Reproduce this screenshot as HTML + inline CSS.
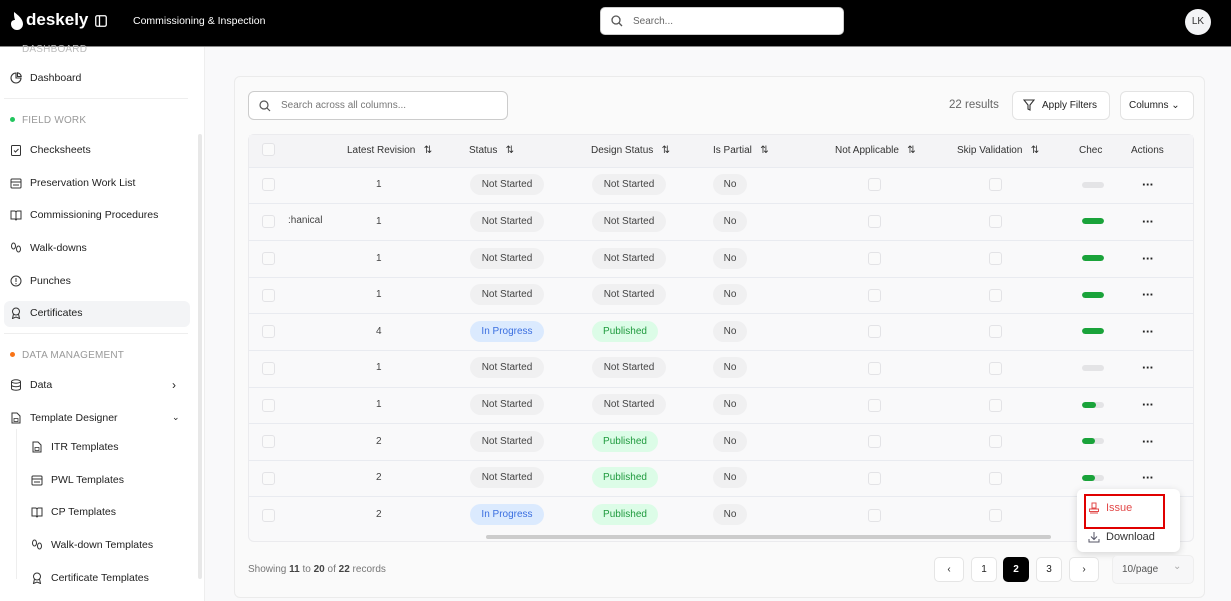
<!DOCTYPE html>
<html><head><meta charset="utf-8">
<style>
*{box-sizing:border-box;margin:0;padding:0}
body{width:1231px;height:601px;overflow:hidden;background:#f9f9fa;font-family:"Liberation Sans",sans-serif;font-size:11px;color:#222;position:relative}
.a{position:absolute}
.hdr{left:0;top:0;width:1231px;height:47px;background:#000;border-bottom:1px solid #888}
.side{left:0;top:47px;width:205px;height:554px;background:#fff;border-right:1px solid #eee}
.nav{position:absolute;left:10px;font-size:10.5px;color:#222;display:flex;align-items:center;gap:8px}
.nav svg{width:12px;height:12px}
.sec{position:absolute;left:22px;font-size:10px;color:#999;letter-spacing:.2px}
.card{left:234px;top:76px;width:971px;height:522px;background:#fafafa;border:1px solid #ebebeb;border-radius:6px}
.th{font-size:10px;color:#333;top:145px}
.pill{position:absolute;height:21px;line-height:21px;border-radius:11px;background:#f0f0f1;color:#444;font-size:10px;text-align:center}
.cb{position:absolute;width:13px;height:13px;border:1px solid #e3e3e6;border-radius:3px;background:#fafafa}
.rowl{position:absolute;left:249px;width:944px;height:1px;background:#e9ebf0}
.dots{position:absolute;font-size:13px;font-weight:bold;letter-spacing:-0.5px;color:#222}
.bar{position:absolute;left:1082px;width:22px;height:6px;border-radius:3px;background:#e4e4e6;overflow:hidden}
.bar i{display:block;height:6px;background:#1aa33a;border-radius:3px}
.pg{position:absolute;top:557px;width:26px;height:25px;border:1px solid #e5e5e5;border-radius:5px;background:#fff;text-align:center;line-height:24px;font-size:10px}
</style></head><body>
<div class="a hdr">
  <svg class="a" style="left:9px;top:12px" width="14" height="18" viewBox="0 0 14 18"><path d="M5 0 C9 3 14 7 14 12 A6 6 0 0 1 2 12 C2 9 4 8 6 8 C5 5 5 3 5 0Z" fill="#fff"/></svg>
  <div class="a" style="left:26px;top:10px;color:#fff;font-size:17px;font-weight:bold">deskely</div>
  <svg class="a" style="left:95px;top:15px" width="12" height="12" viewBox="0 0 12 12"><rect x="0.75" y="0.75" width="10.5" height="10.5" rx="1.5" fill="none" stroke="#fff" stroke-width="1.3"/><line x1="4.5" y1="1" x2="4.5" y2="11" stroke="#fff" stroke-width="1.3"/></svg>
  <div class="a" style="left:133px;top:15px;color:#fff;font-size:10.5px">Commissioning &amp; Inspection</div>
  <div class="a" style="left:600px;top:7px;width:244px;height:28px;background:#fff;border-radius:5px;border:1px solid #ccc"></div>
  <svg class="a" style="left:611px;top:15px" width="12" height="12" viewBox="0 0 12 12"><circle cx="5" cy="5" r="4" fill="none" stroke="#555" stroke-width="1.3"/><line x1="8" y1="8" x2="11" y2="11" stroke="#555" stroke-width="1.3"/></svg>
  <div class="a" style="left:633px;top:16px;color:#666;font-size:10px">Search...</div>
  <div class="a" style="left:1185px;top:9px;width:26px;height:26px;border-radius:50%;background:#f3f4f6;text-align:center;line-height:26px;font-size:10px;color:#333">LK</div>
</div>
<div class="a side">
  <div class="sec" style="top:-3px;color:#bbb">DASHBOARD</div>
  <div class="nav" style="top:25px"><svg viewBox="0 0 12 12"><path d="M6 1A5 5 0 1 0 11 6H6Z" fill="none" stroke="#333" stroke-width="1.1"/><path d="M7.5 0.8A4.5 4.5 0 0 1 11.2 4.5H7.5Z" fill="none" stroke="#333" stroke-width="1.1"/></svg>Dashboard</div>
  <div class="a" style="left:4px;top:51px;width:184px;height:1px;background:#eee"></div>
  <div class="a" style="left:10px;top:70px;width:5px;height:5px;border-radius:50%;background:#22c55e"></div>
  <div class="sec" style="top:68px">FIELD WORK</div>
  <div class="nav" style="top:97px"><svg viewBox="0 0 12 12"><rect x="1.5" y="1.5" width="9" height="10" rx="1" fill="none" stroke="#333"/><path d="M4 6.5l1.5 1.5 3-3" fill="none" stroke="#333"/></svg>Checksheets</div>
  <div class="nav" style="top:130px"><svg viewBox="0 0 12 12"><rect x="1" y="2" width="10" height="9" rx="1" fill="none" stroke="#333"/><line x1="1" y1="5" x2="11" y2="5" stroke="#333"/><line x1="3" y1="8" x2="9" y2="8" stroke="#333"/></svg>Preservation Work List</div>
  <div class="nav" style="top:162px"><svg viewBox="0 0 12 12"><path d="M1 2h4l1 1 1-1h4v8H7l-1 1-1-1H1Z M6 3v8" fill="none" stroke="#333"/></svg>Commissioning Procedures</div>
  <div class="nav" style="top:195px"><svg viewBox="0 0 12 12"><ellipse cx="3.5" cy="4" rx="2" ry="3" fill="none" stroke="#333"/><ellipse cx="8.5" cy="7" rx="2" ry="3" fill="none" stroke="#333"/></svg>Walk-downs</div>
  <div class="nav" style="top:228px"><svg viewBox="0 0 12 12"><circle cx="6" cy="6" r="5" fill="none" stroke="#333"/><line x1="6" y1="3" x2="6" y2="7" stroke="#333"/><circle cx="6" cy="8.7" r=".6" fill="#333"/></svg>Punches</div>
  <div class="a" style="left:4px;top:254px;width:186px;height:26px;background:#f3f4f6;border-radius:6px"></div>
  <div class="nav" style="top:260px"><svg viewBox="0 0 12 12"><circle cx="6" cy="4.5" r="3.5" fill="none" stroke="#333"/><path d="M3.5 7l-1 4.5 3.5-1.5 3.5 1.5-1-4.5" fill="none" stroke="#333"/></svg>Certificates</div>
  <div class="a" style="left:4px;top:286px;width:184px;height:1px;background:#eee"></div>
  <div class="a" style="left:10px;top:305px;width:5px;height:5px;border-radius:50%;background:#f97316"></div>
  <div class="sec" style="top:303px">DATA MANAGEMENT</div>
  <div class="nav" style="top:332px"><svg viewBox="0 0 12 12"><ellipse cx="6" cy="2.5" rx="4.5" ry="1.7" fill="none" stroke="#333"/><path d="M1.5 2.5v7c0 1 2 1.7 4.5 1.7s4.5-.7 4.5-1.7v-7M1.5 6c0 1 2 1.7 4.5 1.7s4.5-.7 4.5-1.7" fill="none" stroke="#333"/></svg>Data</div>
  <div class="a" style="left:172px;top:331px;font-size:12px">›</div>
  <div class="nav" style="top:365px"><svg viewBox="0 0 12 12"><path d="M2 1h5l3 3v7H2Z" fill="none" stroke="#333"/><rect x="4" y="6.5" width="4" height="3" fill="none" stroke="#333" stroke-width=".8"/></svg>Template Designer</div>
  <div class="a" style="left:172px;top:365px;font-size:9px">⌄</div>
  <div class="a" style="left:16px;top:382px;width:1px;height:150px;background:#eee"></div>
  <div class="nav" style="left:31px;top:394px"><svg viewBox="0 0 12 12"><path d="M2 1h5l3 3v7H2Z" fill="none" stroke="#333"/><rect x="4" y="6.5" width="4" height="3" fill="none" stroke="#333" stroke-width=".8"/></svg>ITR Templates</div>
  <div class="nav" style="left:31px;top:427px"><svg viewBox="0 0 12 12"><rect x="1" y="2" width="10" height="9" rx="1" fill="none" stroke="#333"/><line x1="1" y1="5" x2="11" y2="5" stroke="#333"/><line x1="3" y1="8" x2="9" y2="8" stroke="#333"/></svg>PWL Templates</div>
  <div class="nav" style="left:31px;top:459px"><svg viewBox="0 0 12 12"><path d="M1 2h4l1 1 1-1h4v8H7l-1 1-1-1H1Z M6 3v8" fill="none" stroke="#333"/></svg>CP Templates</div>
  <div class="nav" style="left:31px;top:492px"><svg viewBox="0 0 12 12"><ellipse cx="3.5" cy="4" rx="2" ry="3" fill="none" stroke="#333"/><ellipse cx="8.5" cy="7" rx="2" ry="3" fill="none" stroke="#333"/></svg>Walk-down Templates</div>
  <div class="nav" style="left:31px;top:525px"><svg viewBox="0 0 12 12"><circle cx="6" cy="4.5" r="3.5" fill="none" stroke="#333"/><path d="M3.5 7l-1 4.5 3.5-1.5 3.5 1.5-1-4.5" fill="none" stroke="#333"/></svg>Certificate Templates</div>
  <div class="a" style="left:198px;top:87px;width:4px;height:445px;background:#e8e8e8;border-radius:2px"></div>
</div>

<div class="a card"></div>
<div class="a" style="left:248px;top:91px;width:260px;height:29px;border:1px solid #ccc;border-radius:6px;background:#fff"></div>
<svg class="a" style="left:259px;top:100px" width="12" height="12" viewBox="0 0 12 12"><circle cx="5" cy="5" r="4" fill="none" stroke="#555" stroke-width="1.2"/><line x1="8" y1="8" x2="11" y2="11" stroke="#555" stroke-width="1.2"/></svg>
<div class="a" style="left:281px;top:100px;color:#777;font-size:10px">Search across all columns...</div>
<div class="a" style="left:949px;top:99px;color:#666;font-size:11.5px">22 results</div>
<div class="a" style="left:1012px;top:91px;width:98px;height:29px;border:1px solid #e3e3e3;border-radius:6px;background:#fff"></div>
<svg class="a" style="left:1023px;top:99px" width="12" height="12" viewBox="0 0 12 12"><path d="M1 1h10L7 6v5L5 10V6Z" fill="none" stroke="#333" stroke-width="1.1"/></svg>
<div class="a" style="left:1042px;top:100px;font-size:10px">Apply Filters</div>
<div class="a" style="left:1120px;top:91px;width:74px;height:29px;border:1px solid #e3e3e3;border-radius:6px;background:#fff"></div>
<div class="a" style="left:1129px;top:100px;font-size:10px">Columns ⌄</div>

<div class="a" style="left:248px;top:134px;width:946px;height:408px;border:1px solid #ebebee;border-radius:6px;background:#f9f9fa"></div>
<div class="a" style="left:249px;top:135px;width:944px;height:32px;background:#f4f4f6"></div>
<div class="cb" style="left:262px;top:143px"></div>
<div class="a th" style="left:347px">Latest Revision &nbsp; ⇅</div>
<div class="a th" style="left:469px">Status &nbsp; ⇅</div>
<div class="a th" style="left:591px">Design Status &nbsp; ⇅</div>
<div class="a th" style="left:713px">Is Partial &nbsp; ⇅</div>
<div class="a th" style="left:835px">Not Applicable &nbsp; ⇅</div>
<div class="a th" style="left:957px">Skip Validation &nbsp; ⇅</div>
<div class="a th" style="left:1079px">Chec</div>
<div class="a th" style="left:1131px">Actions</div>

<div class="rowl" style="top:167px"></div><div class="rowl" style="top:203px"></div><div class="rowl" style="top:240px"></div><div class="rowl" style="top:277px"></div><div class="rowl" style="top:313px"></div><div class="rowl" style="top:350px"></div><div class="rowl" style="top:387px"></div><div class="rowl" style="top:423px"></div><div class="rowl" style="top:460px"></div><div class="rowl" style="top:496px"></div>

<div class="cb" style="left:262px;top:178px"></div><div class="cb" style="left:262px;top:215px"></div><div class="cb" style="left:262px;top:252px"></div><div class="cb" style="left:262px;top:289px"></div><div class="cb" style="left:262px;top:325px"></div><div class="cb" style="left:262px;top:362px"></div><div class="cb" style="left:262px;top:399px"></div><div class="cb" style="left:262px;top:435px"></div><div class="cb" style="left:262px;top:472px"></div><div class="cb" style="left:262px;top:509px"></div>
<div class="cb" style="left:868px;top:178px"></div><div class="cb" style="left:868px;top:215px"></div><div class="cb" style="left:868px;top:252px"></div><div class="cb" style="left:868px;top:289px"></div><div class="cb" style="left:868px;top:325px"></div><div class="cb" style="left:868px;top:362px"></div><div class="cb" style="left:868px;top:399px"></div><div class="cb" style="left:868px;top:435px"></div><div class="cb" style="left:868px;top:472px"></div><div class="cb" style="left:868px;top:509px"></div>
<div class="cb" style="left:989px;top:178px"></div><div class="cb" style="left:989px;top:215px"></div><div class="cb" style="left:989px;top:252px"></div><div class="cb" style="left:989px;top:289px"></div><div class="cb" style="left:989px;top:325px"></div><div class="cb" style="left:989px;top:362px"></div><div class="cb" style="left:989px;top:399px"></div><div class="cb" style="left:989px;top:435px"></div><div class="cb" style="left:989px;top:472px"></div><div class="cb" style="left:989px;top:509px"></div>

<div class="a" style="left:288px;top:215px;font-size:10px;color:#444">:hanical</div>

<div class="a" style="left:376px;top:179px;font-size:10px;color:#444">1</div>
<div class="a" style="left:376px;top:216px;font-size:10px;color:#444">1</div>
<div class="a" style="left:376px;top:253px;font-size:10px;color:#444">1</div>
<div class="a" style="left:376px;top:289px;font-size:10px;color:#444">1</div>
<div class="a" style="left:376px;top:326px;font-size:10px;color:#444">4</div>
<div class="a" style="left:376px;top:362px;font-size:10px;color:#444">1</div>
<div class="a" style="left:376px;top:399px;font-size:10px;color:#444">1</div>
<div class="a" style="left:376px;top:436px;font-size:10px;color:#444">2</div>
<div class="a" style="left:376px;top:472px;font-size:10px;color:#444">2</div>
<div class="a" style="left:376px;top:509px;font-size:10px;color:#444">2</div>

<div class="pill" style="left:470px;top:174px;width:74px">Not Started</div>
<div class="pill" style="left:470px;top:211px;width:74px">Not Started</div>
<div class="pill" style="left:470px;top:248px;width:74px">Not Started</div>
<div class="pill" style="left:470px;top:284px;width:74px">Not Started</div>
<div class="pill" style="left:470px;top:321px;width:74px;background:#dbeafe;color:#3b6fe0">In Progress</div>
<div class="pill" style="left:470px;top:357px;width:74px">Not Started</div>
<div class="pill" style="left:470px;top:394px;width:74px">Not Started</div>
<div class="pill" style="left:470px;top:431px;width:74px">Not Started</div>
<div class="pill" style="left:470px;top:467px;width:74px">Not Started</div>
<div class="pill" style="left:470px;top:504px;width:74px;background:#dbeafe;color:#3b6fe0">In Progress</div>
<div class="pill" style="left:592px;top:174px;width:74px">Not Started</div>
<div class="pill" style="left:592px;top:211px;width:74px">Not Started</div>
<div class="pill" style="left:592px;top:248px;width:74px">Not Started</div>
<div class="pill" style="left:592px;top:284px;width:74px">Not Started</div>
<div class="pill" style="left:592px;top:321px;width:66px;background:#dcfce7;color:#1f9a3e">Published</div>
<div class="pill" style="left:592px;top:357px;width:74px">Not Started</div>
<div class="pill" style="left:592px;top:394px;width:74px">Not Started</div>
<div class="pill" style="left:592px;top:431px;width:66px;background:#dcfce7;color:#1f9a3e">Published</div>
<div class="pill" style="left:592px;top:467px;width:66px;background:#dcfce7;color:#1f9a3e">Published</div>
<div class="pill" style="left:592px;top:504px;width:66px;background:#dcfce7;color:#1f9a3e">Published</div>
<div class="pill" style="left:713px;top:174px;width:34px">No</div>
<div class="pill" style="left:713px;top:211px;width:34px">No</div>
<div class="pill" style="left:713px;top:248px;width:34px">No</div>
<div class="pill" style="left:713px;top:284px;width:34px">No</div>
<div class="pill" style="left:713px;top:321px;width:34px">No</div>
<div class="pill" style="left:713px;top:357px;width:34px">No</div>
<div class="pill" style="left:713px;top:394px;width:34px">No</div>
<div class="pill" style="left:713px;top:431px;width:34px">No</div>
<div class="pill" style="left:713px;top:467px;width:34px">No</div>
<div class="pill" style="left:713px;top:504px;width:34px">No</div>
<div class="bar" style="top:182px"></div>
<div class="bar" style="top:218px"><i style="width:22px"></i></div>
<div class="bar" style="top:255px"><i style="width:22px"></i></div>
<div class="bar" style="top:292px"><i style="width:22px"></i></div>
<div class="bar" style="top:328px"><i style="width:22px"></i></div>
<div class="bar" style="top:365px"></div>
<div class="bar" style="top:402px"><i style="width:14px"></i></div>
<div class="bar" style="top:438px"><i style="width:13px"></i></div>
<div class="bar" style="top:475px"><i style="width:13px"></i></div>
<div class="dots" style="left:1142px;top:177px">···</div>
<div class="dots" style="left:1142px;top:214px">···</div>
<div class="dots" style="left:1142px;top:251px">···</div>
<div class="dots" style="left:1142px;top:287px">···</div>
<div class="dots" style="left:1142px;top:324px">···</div>
<div class="dots" style="left:1142px;top:360px">···</div>
<div class="dots" style="left:1142px;top:397px">···</div>
<div class="dots" style="left:1142px;top:434px">···</div>
<div class="dots" style="left:1142px;top:470px">···</div>

<div class="a" style="left:486px;top:535px;width:565px;height:4px;border-radius:2px;background:#ccc"></div>

<div class="a" style="left:1077px;top:489px;width:103px;height:63px;background:#fff;border-radius:6px;box-shadow:0 2px 8px rgba(0,0,0,.15)"></div>
<div class="a" style="left:1084px;top:494px;width:81px;height:35px;border:2px solid #e00000"></div>
<svg class="a" style="left:1088px;top:502px" width="12" height="12" viewBox="0 0 12 12"><path d="M4 1h4v5H4Z M1.5 7h9v2.5h-9Z M2 11h8" fill="none" stroke="#e24a4a" stroke-width="1"/></svg>
<div class="a" style="left:1106px;top:502px;font-size:11px;color:#e24a4a">Issue</div>
<svg class="a" style="left:1088px;top:531px" width="12" height="12" viewBox="0 0 12 12"><path d="M6 1v7M3 5.5L6 8.5 9 5.5M1 8v3h10V8" fill="none" stroke="#556" stroke-width="1"/></svg>
<div class="a" style="left:1106px;top:531px;font-size:11px;color:#333">Download</div>

<div class="a" style="left:248px;top:564px;font-size:10px;color:#777">Showing <b style="color:#444">11</b> to <b style="color:#444">20</b> of <b style="color:#444">22</b> records</div>
<div class="pg" style="left:934px;width:30px">‹</div>
<div class="pg" style="left:971px">1</div>
<div class="pg" style="left:1003px;background:#000;color:#fff;border-color:#000;font-weight:bold">2</div>
<div class="pg" style="left:1036px">3</div>
<div class="pg" style="left:1069px;width:30px">›</div>
<div class="a" style="left:1112px;top:555px;width:82px;height:29px;border:1px solid #eee;border-radius:5px;background:#f7f7f8"></div>
<div class="a" style="left:1122px;top:564px;font-size:10px;color:#555">10/page</div>
<div class="a" style="left:1173px;top:561px;font-size:10px;color:#aaa">⌄</div>
</body></html>
